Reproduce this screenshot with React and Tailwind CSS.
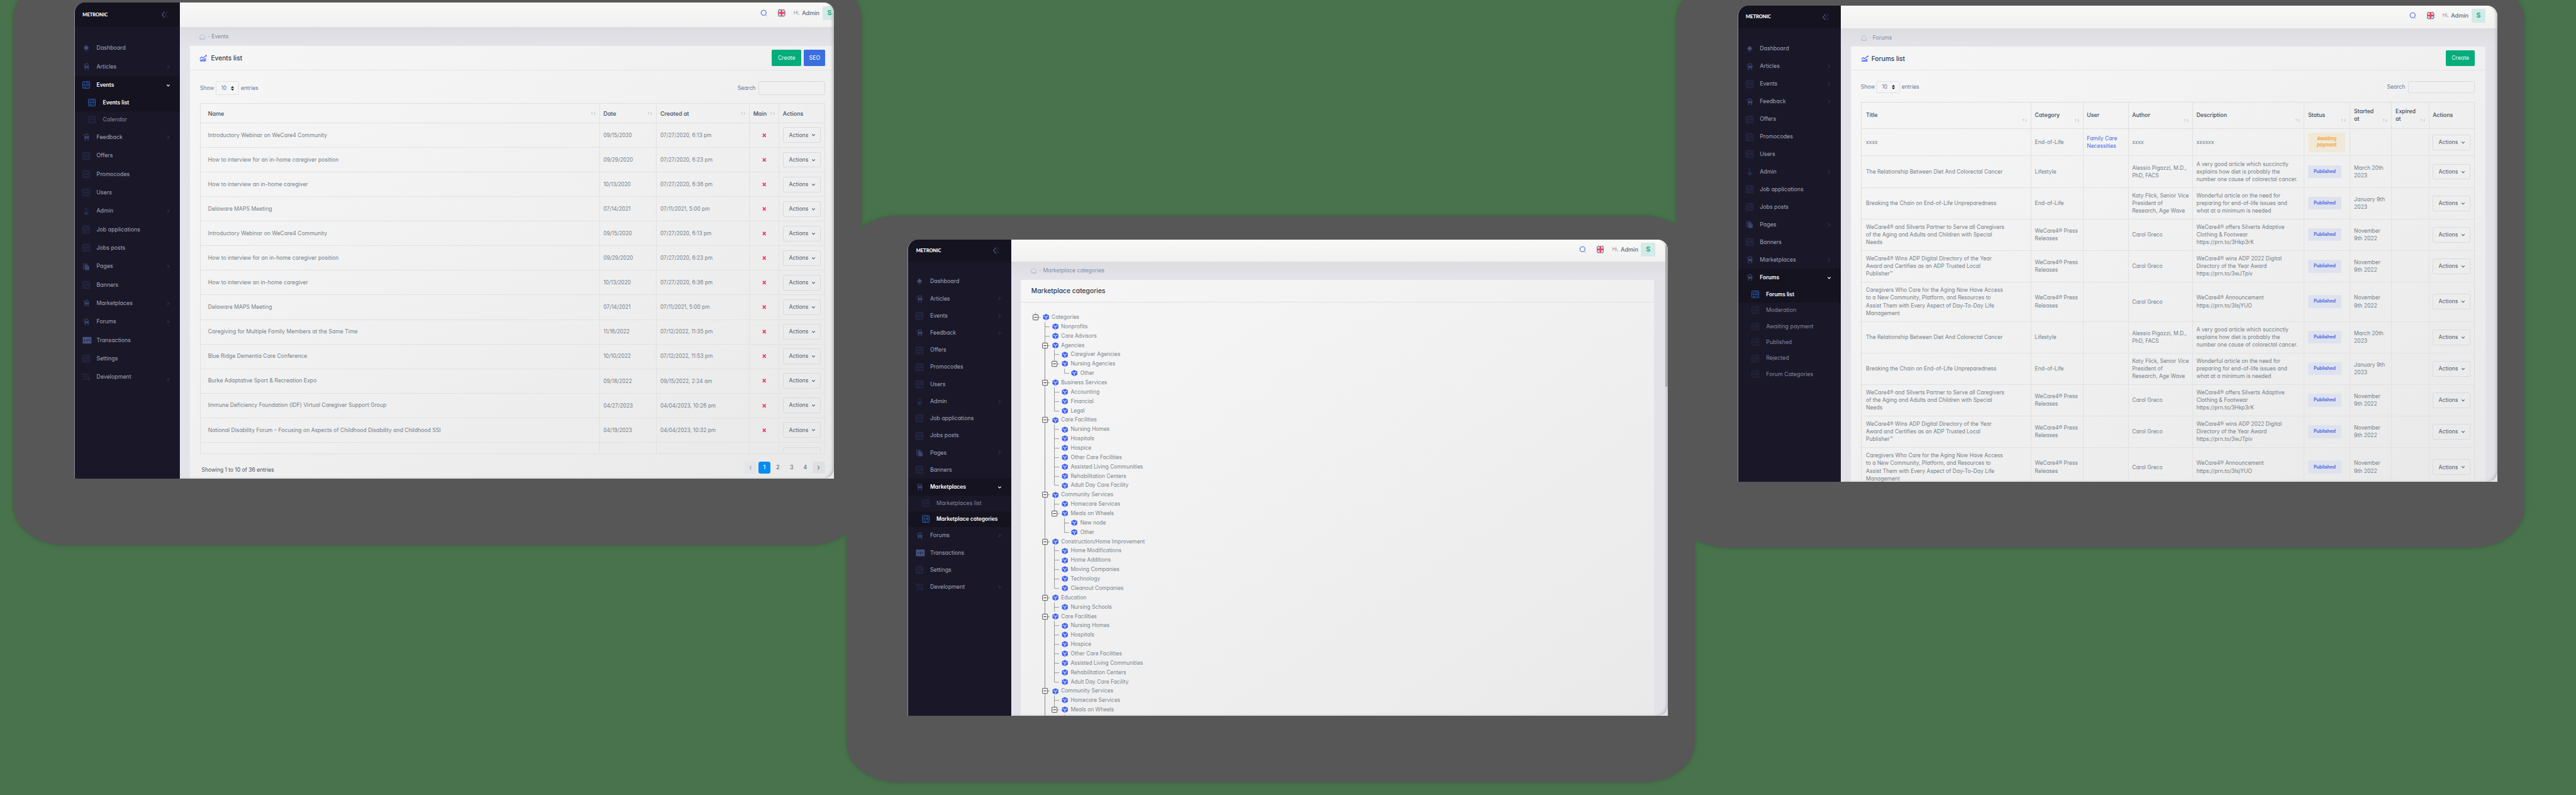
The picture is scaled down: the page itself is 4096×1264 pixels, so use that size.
import React from "react";

const Diamond = () => (
  <svg viewBox="0 0 14 14" className="h-[14px] w-[14px]" fill="currentColor">
    <path d="M7 0.8L11.8 5.6L7 10.4L2.2 5.6Z" />
    <path d="M2.6 8L7 12.4L11.4 8L12 8.7L7 13.6L2 8.7Z" opacity="0.45" />
  </svg>
);
const Cart = () => (
  <svg viewBox="0 0 14 14" className="h-[14px] w-[14px]" fill="currentColor">
    <path d="M1 2.2L3.4 5L3.9 9.5H11.6L12.6 5.2H4.4L1.8 1.6Z" />
    <path d="M5 5V3.8a2.7 2.7 0 0 1 5.4 0V5" fill="none" stroke="currentColor" strokeWidth="1.2" />
    <circle cx="5.2" cy="12.2" r="0.9" />
    <circle cx="10.4" cy="12.2" r="0.9" />
    <rect x="4.4" y="9.4" width="1.4" height="2.4" />
    <rect x="9.8" y="9.4" width="1.4" height="2.4" />
  </svg>
);
const Sheet = () => (
  <svg viewBox="0 0 14 14" className="h-[14px] w-[14px]" fill="none" stroke="currentColor" strokeWidth="1">
    <rect x="0.7" y="0.7" width="12.4" height="12.6" rx="0.8" />
    <path d="M2.5 3.2H5M6.5 3.2H11.4M2.6 6.8H5.4M8.4 6.8H11.4M7 5V8.8M2.6 10.9H7.6M9.6 10.9H11.4M3 5L4.4 8.6M11 5L9.8 8.6" />
  </svg>
);
const Person = () => (
  <svg viewBox="0 0 14 14" className="h-[14px] w-[14px]" fill="none" stroke="currentColor" strokeWidth="1">
    <path d="M5.6 5.6V2.6a1.4 1.4 0 0 1 2.8 0v3" />
    <path d="M5.6 5.6C4 6.4 3.2 7.8 3.2 9.2A3.8 3.8 0 0 0 10.8 9.2C10.8 7.8 10 6.4 8.4 5.6" />
    <path d="M5 8.4h4v2.2L7 12.4L5 10.6Z" fill="currentColor" />
  </svg>
);
const Pages = () => (
  <svg viewBox="0 0 14 14" className="h-[14px] w-[14px]">
    <path d="M1 0.8h8v1.6H3.4v9H1Z" fill="currentColor" opacity="0.6" />
    <path d="M4.4 3h5.2l2.8 2.8v7.4h-8Z" fill="currentColor" />
    <path d="M9.4 3.6v2.6H12" fill="none" stroke="#1a1828" strokeWidth="0.7" />
  </svg>
);
const Money = () => (
  <svg viewBox="0 0 17 14" className="h-[14px] w-[17px]">
    <rect x="0.6" y="1" width="15.8" height="12" rx="0.6" fill="currentColor" />
    <path d="M4.2 5v4.6M6.6 6.4l2-1v4.2M10.4 5.4h2.4v4.2" fill="none" stroke="#1a1828" strokeWidth="1" />
  </svg>
);
const Sliders = () => (
  <svg viewBox="0 0 14 14" className="h-[14px] w-[14px]" fill="none" stroke="currentColor" strokeWidth="1">
    <path d="M4 2.6H13M1 7H4.4M9.2 7H13M1 11.4H9.6M6.8 5V9" />
    <circle cx="2.4" cy="2.6" r="1.4" />
    <circle cx="11.4" cy="11.4" r="1.4" />
  </svg>
);
const ICONS = { diamond: Diamond, cart: Cart, sheet: Sheet, person: Person, pages: Pages, money: Money, sliders: Sliders };
const ICON_COLORS = {
  diamond: "text-[#454d78]",
  cart: "text-[#39426b]",
  sheet: "text-[#2f345a]",
  person: "text-[#2b3054]",
  pages: "text-[#3a4570]",
  money: "text-[#46537f]",
  sliders: "text-[#2f3559]",
};

const Chevron = ({ open }) =>
  open ? (
    <svg viewBox="0 0 8 8" className="h-[8px] w-[8px] text-white" fill="none" stroke="currentColor" strokeWidth="1.4">
      <path d="M1.4 3L4 5.6L6.6 3" />
    </svg>
  ) : (
    <svg viewBox="0 0 8 8" className="h-[8px] w-[8px] text-[#4b5070]" fill="none" stroke="currentColor" strokeWidth="0.9">
      <path d="M2.6 1.2L5.4 4L2.6 6.8" />
    </svg>
  );

const Home = () => (
  <svg viewBox="0 0 12 12" className="h-[12px] w-[11px]" fill="none" stroke="#a9b6cf" strokeWidth="1">
    <path d="M1.2 5L6 1L10.8 5V11H1.2Z" />
    <path d="M2.4 9.4H9.6V11H2.4Z" fill="#b9c4d8" stroke="none" />
  </svg>
);
const Chart = () => (
  <svg viewBox="0 0 14 12" className="h-[12px] w-[14px]" fill="#4263f0">
    <path d="M1 10.2L4.2 7.8L6.4 9L12 5.4V12H1Z" opacity="0.6" />
    <path d="M2 9h1.6v3H2zM5.4 9h1.6v3H5.400zM9 7.400h1.600V12H9z" />
    <path d="M0.800 7.600L4 4L6.800 6.200L12.400 1M12.800 0.600V3.400" fill="none" stroke="#4263f0" strokeWidth="1.300" />
  </svg>
);
const Cube = () => (
  <svg viewBox="0 0 12 12" className="h-[12px] w-[12px]">
    <path d="M6 0.300L11.400 3V9L6 11.800L0.600 9V3Z" fill="#4263ee" />
    <path d="M6 11V6.400L2.600 4M6 6.400L9.400 4" fill="none" stroke="#e8ecfb" strokeWidth="1.200" />
  </svg>
);
const Flag = () => (
  <svg viewBox="0 0 13 13" className="h-[13px] w-[13px]">
    <rect width="13" height="13" rx="2.500" fill="#243a78" />
    <path d="M1 1L12 12M12 1L1 12" stroke="#f3f3f5" strokeWidth="2" />
    <path d="M6.500 0V13M0 6.500H13" stroke="#f3f3f5" strokeWidth="5" />
    <path d="M6.500 0V13M0 6.500H13" stroke="#e8455e" strokeWidth="3" />
  </svg>
);
const Lens = () => (
  <svg viewBox="0 0 13 13" className="h-[13px] w-[13px]" fill="none">
    <circle cx="6" cy="6" r="4.600" stroke="#4a63ea" strokeWidth="1.300" />
    <path d="M9.600 9.800L12.200 12.400" stroke="#b9c3f2" strokeWidth="1.300" />
  </svg>
);
const SortIcon = () => (
  <svg viewBox="0 0 10 7" className="h-[7px] w-[10px] shrink-0" fill="none" stroke="#bcc0c6" strokeWidth="0.900">
    <path d="M2.500 6V1.200M1.200 2.500L2.500 1.200L3.800 2.500M7.500 1V5.800M6.200 4.500L7.500 5.800L8.800 4.500" />
  </svg>
);
const UpDown = () => (
  <svg viewBox="0 0 6 8" className="h-[8px] w-[6px]" fill="#14161f">
    <path d="M3 0L6 3.200H0ZM3 8L0 4.800H6Z" />
  </svg>
);

const NAV = [
  ["Dashboard", "diamond", false],
  ["Articles", "cart", true],
  ["Events", "sheet", true],
  ["Feedback", "cart", true],
  ["Offers", "sheet", false],
  ["Promocodes", "sheet", false],
  ["Users", "sheet", false],
  ["Admin", "person", true],
  ["Job applications", "sheet", false],
  ["Jobs posts", "sheet", false],
  ["Pages", "pages", true],
  ["Banners", "sheet", false],
  ["Marketplaces", "cart", true],
  ["Forums", "cart", true],
  ["Transactions", "money", false],
  ["Settings", "sheet", false],
  ["Development", "sliders", true],
];

function Sidebar({ width, header, navPad, row, subRow, open, subs, activeSub, last = "Development", blueParent, lowLast }) {
  const end = NAV.findIndex((n) => n[0] === last) + 1;
  return (
    <aside className={`flex shrink-0 flex-col overflow-hidden bg-[#1a1828] ${width}`}>
      <div className={`flex shrink-0 items-center justify-between bg-[#151320] pl-[14px] pr-[20px] ${header}`}>
        <span className="font-['Lato'] text-[8.6px] font-black leading-none text-white">METRONIC</span>
        <svg viewBox="0 0 14 12" className="h-[12px] w-[14px]" fill="none" strokeWidth="1.300">
          <path d="M6.500 0.600L2 6L6.500 11.400" stroke="#56608f" />
          <path d="M12 0.600L7.500 6L12 11.400" stroke="#2c3157" />
        </svg>
      </div>
      <nav className={`flex flex-col ${navPad}`}>
        {NAV.slice(0, end).map(([label, icon, arrow]) => {
          const isOpen = label === open;
          const Icon = ICONS[icon];
          return (
            <React.Fragment key={label}>
              <div className={`flex items-center pl-[13.500px] pr-[17px] ${row} ${isOpen ? "bg-[#151320]" : ""}`}>
                <span className={`flex w-[26px] shrink-0 ${isOpen && blueParent ? "text-[#2f6fd0]" : ICON_COLORS[icon]}`}>
                  <Icon />
                </span>
                <span className={`flex-1 whitespace-nowrap ${isOpen ? "text-[9.800px] font-semibold text-white" : "text-[10.100px] text-[#a3a5bb]"}`}>
                  {label}
                </span>
                {arrow && (
                  <span className={lowLast && label === last ? "pt-[10px]" : ""}>
                    <Chevron open={isOpen} />
                  </span>
                )}
              </div>
              {isOpen &&
                subs.map((s) => (
                  <div key={s} className={`flex items-center pl-[24.500px] ${subRow} ${s === activeSub ? "bg-[#151320]" : ""}`}>
                    <span className={`flex w-[26.500px] shrink-0 ${s === activeSub ? "text-[#2f6fd0]" : "text-[#2b2e4d]"}`}>
                      <Sheet />
                    </span>
                    <span className={`whitespace-nowrap ${s === activeSub ? "text-[9.650px] font-semibold text-white" : "text-[10.100px] text-[#8385a0]"}`}>
                      {s}
                    </span>
                  </div>
                ))}
            </React.Fragment>
          );
        })}
      </nav>
    </aside>
  );
}

function TopBar({ height, pad }) {
  return (
    <header className={`flex shrink-0 items-center justify-end bg-gradient-to-b from-[#f8f8f6] to-[#f1f1f1] ${height} ${pad}`}>
      <Lens />
      <div className="ml-[19.500px]"><Flag /></div>
      <span className="ml-[15px] w-[15.500px] text-[9px] text-[#8f97a8]">Hi,</span>
      <span className="w-[37px] text-[10.400px] font-medium text-[#5b6680]">Admin</span>
      <span className="flex h-[26px] w-[26px] shrink-0 items-center justify-center rounded-[3px] bg-[#d3eae6] text-[12px] font-bold text-[#10ad83]">S</span>
    </header>
  );
}

function Crumb({ label, height }) {
  return (
    <div className={`flex shrink-0 items-center bg-gradient-to-b from-[#dcdce1] to-[#e3e3e9] pl-[36px] text-[9.900px] text-[#7f90a8] ${height}`}>
      <Home />
      <span className="ml-[5px] mr-[4px] h-[2px] w-[2px] rounded-full bg-[#b6bfce]" />
      {label}
    </div>
  );
}

function Toolbar({ height, inputH }) {
  return (
    <div className={`flex shrink-0 items-center justify-between text-[9.800px] text-[#66799a] ${height}`}>
      <div className="flex items-center">
        <span className="w-[28.500px]">Show</span>
        <span className={`mr-[3.500px] flex w-[42.500px] items-center justify-between rounded-[2px] border border-[#dfe1e6] bg-[#f5f5f6] pl-[9px] pr-[8px] text-[9.500px] ${inputH}`}>
          10 <UpDown />
        </span>
        entries
      </div>
      <div className="flex items-center gap-[5px]">
        Search
        <span className={`w-[122px] rounded-[2px] border border-[#d9dbdf] bg-[#f0f0f0] ${inputH}`} />
      </div>
    </div>
  );
}

function ActionsButton() {
  return (
    <span className="flex h-[28.500px] w-[68.500px] shrink-0 items-center justify-between rounded-[2.500px] border border-[#d9dadf] pl-[9.500px] pr-[8px] text-[9.900px] text-[#525d68]">
      Actions
      <svg viewBox="0 0 8 8" className="h-[8px] w-[8px]" fill="none" stroke="#525d68" strokeWidth="1.200">
        <path d="M1.400 2.800L4 5.400L6.600 2.800" />
      </svg>
    </span>
  );
}

const EVENTS = [
  ["Introductory Webinar on WeCare4 Community", "09/15/2020", "07/27/2020, 6:13 pm"],
  ["How to interview for an in-home caregiver position", "09/29/2020", "07/27/2020, 6:23 pm"],
  ["How to interview an in-home caregiver", "10/13/2020", "07/27/2020, 6:36 pm"],
  ["Delaware MAPS Meeting", "07/14/2021", "07/11/2021, 5:00 pm"],
  ["Introductory Webinar on WeCare4 Community", "09/15/2020", "07/27/2020, 6:13 pm"],
  ["How to interview for an in-home caregiver position", "09/29/2020", "07/27/2020, 6:23 pm"],
  ["How to interview an in-home caregiver", "10/13/2020", "07/27/2020, 6:36 pm"],
  ["Delaware MAPS Meeting", "07/14/2021", "07/11/2021, 5:00 pm"],
  ["Caregiving for Multiple Family Members at the Same Time", "11/16/2022", "07/12/2022, 11:35 pm"],
  ["Blue Ridge Dementia Care Conference", "10/10/2022", "07/12/2022, 11:53 pm"],
  ["Burke Adaptative Sport & Recreation Expo", "09/18/2022", "09/15/2022, 2:24 am"],
  ["Immune Deficiency Foundation (IDF) Virtual Caregiver Support Group", "04/27/2023", "04/04/2023, 10:26 pm"],
  ["National Disability Forum – Focusing on Aspects of Childhood Disability and Childhood SSI", "04/19/2023", "04/04/2023, 10:32 pm"],
];
const EV_COLS = "grid grid-cols-[725px_103.500px_169px_54px_1fr]";

function EventsWindow() {
  return (
    <div className="absolute left-[135px] top-[5px] flex h-[866px] w-[1382px] overflow-hidden rounded-t-[19px] border-l border-[#8d8c98] bg-[#e3e4e9]">
      <Sidebar
        width="w-[190.500px]" header="h-[44px]" navPad="pt-[22px]" row="h-[33.550px]" subRow="h-[30.700px]"
        open="Events" subs={["Events list", "Calendar"]} activeSub="Events list" blueParent lowLast
      />
      <main className="flex w-[1191px] shrink-0 flex-col">
        <TopBar height="h-[44px] pb-[6px]" pad="-mr-[4px]" />
        <Crumb label="Events" height="h-[35px]" />
        <section className="ml-[18.500px] flex flex-1 flex-col bg-gradient-to-br from-[#f6f6f6] via-[#f0f0f0] to-[#e9e9e9]">
          <div className="flex h-[44.500px] shrink-0 items-center border-b border-[#e2e3e7] pl-[18px] pr-[16.500px]">
            <Chart />
            <h2 className="ml-[6.500px] flex-1 text-[11.700px] font-medium text-[#2f3a52]">Events list</h2>
            <button className="h-[29.500px] w-[54px] rounded-[2px] bg-[#04ad7b] text-[10px] text-[#eafaf5]">Create</button>
            <button className="ml-[4.500px] h-[29.500px] w-[39px] rounded-[2px] bg-[#3b6fe0] text-[10px] text-white">SEO</button>
          </div>
          <div className="flex flex-1 flex-col pl-[18.500px] pr-[16.500px]">
            <Toolbar height="h-[59.500px] pt-[4px]" inputH="h-[24.500px]" />
            <div className="flex flex-col border border-[#dfe0e4] text-[9.900px] text-[#74828c]">
              <div className={`h-[35px] border-b border-[#dfe0e4] text-[10.300px] font-medium text-[#414c5c] ${EV_COLS}`}>
                {["Name", "Date", "Created at", "Main", "Actions"].map((h, i) => (
                  <div key={h} className={`flex items-center justify-between pr-[6px] ${i === 0 ? "pl-[13.500px]" : "border-l border-[#e0e1e5] pl-[6.500px]"}`}>
                    {h}
                    {i < 4 && <SortIcon />}
                  </div>
                ))}
              </div>
              {EVENTS.map((r, i) => (
                <div key={i} className={`h-[44.700px] border-b border-[#e0e1e4] ${EV_COLS}`}>
                  <div className="flex items-center whitespace-nowrap pl-[13.500px]">{r[0]}</div>
                  <div className="flex items-center border-l border-[#e0e1e5] pl-[6.500px] text-[9.500px]">{r[1]}</div>
                  <div className="flex items-center border-l border-[#e0e1e5] pl-[6.500px] text-[9.500px]">{r[2]}</div>
                  <div className="flex items-center justify-center border-l border-[#e0e1e5]">
                    <svg viewBox="0 0 8 8" className="h-[7.500px] w-[7.500px]" stroke="#ee3560" strokeWidth="1.900">
                      <path d="M1 0.800L7 7.200M7 0.800L1 7.200" />
                    </svg>
                  </div>
                  <div className="flex items-center border-l border-[#e0e1e5] pl-[7px]"><ActionsButton /></div>
                </div>
              ))}
              <div className={`h-[20px] overflow-hidden ${EV_COLS}`}>
                <div />
                <div className="border-l border-[#e0e1e5]" />
                <div className="border-l border-[#e0e1e5]" />
                <div className="border-l border-[#e0e1e5]" />
                <div className="flex items-start border-l border-[#e0e1e5] pl-[7px] pt-[8px]">
                  <div className="h-[9px] w-[68.500px] rounded-t-[2.500px] border border-b-0 border-[#d9dadf]" />
                </div>
              </div>
            </div>
            <div className="flex flex-1 items-start justify-between pt-[13.500px]">
              <span className="pl-[3px] pt-[8px] text-[9.720px] leading-[14px] text-[#4b5666]">Showing 1 to 10 of 36 entries</span>
              <div className="flex items-center gap-[2.800px] pr-[1px] text-[10px] font-medium text-[#626d78]">
                <span className="flex h-[22px] w-[22px] items-center justify-center rounded-[3px] bg-[#e4e5e8] text-[#9aa1aa]">
                  <svg viewBox="0 0 8 8" className="h-[8px] w-[8px]" fill="none" stroke="currentColor" strokeWidth="1.200"><path d="M5.400 0.800L2.600 4L5.400 7.200" /></svg>
                </span>
                <span className="flex h-[22px] w-[22px] items-center justify-center rounded-[4px] bg-[#068bf0] text-white">1</span>
                <span className="w-[22px] text-center">2</span>
                <span className="w-[22px] text-center">3</span>
                <span className="w-[22px] text-center">4</span>
                <span className="flex h-[22px] w-[22px] items-center justify-center rounded-[3px] bg-[#dfe0e4]">
                  <svg viewBox="0 0 8 8" className="h-[8px] w-[8px]" fill="none" stroke="currentColor" strokeWidth="1.200"><path d="M2.600 0.800L5.400 4L2.600 7.200" /></svg>
                </span>
              </div>
            </div>
          </div>
        </section>
      </main>
      <Glass />
    </div>
  );
}

/* Soft shade along the right and bottom edge of a window. */
const Glass = () => (
  <div className="pointer-events-none absolute inset-y-0 left-[192px] right-0 rounded-br-[19px] rounded-tr-[19px] shadow-[inset_-5px_-2px_5px_-3px_#b4b5bb]" />
);

/* kind: "box" has children, "leaf" has none; "end" closes its group; guides lists the ancestor lines */
const care = [
  [2, "Nursing Homes", "leaf"],
  [2, "Hospitals", "leaf"],
  [2, "Hospice", "leaf"],
  [2, "Other Care Facilities", "leaf"],
  [2, "Assisted Living Communities", "leaf"],
  [2, "Rehabilitation Centers", "leaf"],
  [2, "Adult Day Care Facility", "end"],
];
const TREE = [
  [0, "Categories", "box"],
  [1, "Nonprofits", "leaf"],
  [1, "Care Advisors", "leaf"],
  [1, "Agencies", "box"],
  [2, "Caregiver Agencies", "leaf"],
  [2, "Nursing Agencies", "boxend"],
  [3, "Other", "end"],
  [1, "Business Services", "box"],
  [2, "Accounting", "leaf"],
  [2, "Financial", "leaf"],
  [2, "Legal", "end"],
  [1, "Care Facilities", "box"],
  ...care,
  [1, "Community Services", "box"],
  [2, "Homecare Services", "leaf"],
  [2, "Meals on Wheels", "boxend"],
  [3, "New node", "leaf"],
  [3, "Other", "end"],
  [1, "Construction/Home Improvement", "box"],
  [2, "Home Modifications", "leaf"],
  [2, "Home Additions", "leaf"],
  [2, "Moving Companies", "leaf"],
  [2, "Technology", "leaf"],
  [2, "Cleanout Companies", "end"],
  [1, "Education", "box"],
  [2, "Nursing Schools", "leaf"],
  [1, "Care Facilities", "box"],
  ...care,
  [1, "Community Services", "box"],
  [2, "Homecare Services", "leaf"],
  [2, "Meals on Wheels", "boxend"],
  [3, "", "stub"],
];

function Guide({ kind, root }) {
  if (kind === "blank") return <span className="w-[17.400px] shrink-0" />;
  if (kind === "line")
    return <span className="flex w-[17.400px] shrink-0 justify-center"><span className="h-full w-px bg-[#8d8d8d]" /></span>;
  const isBox = kind === "box" || kind === "boxend";
  const closes = kind === "end" || kind === "boxend" || root;
  return (
    <svg viewBox="0 0 17.4 17" className="h-[17px] w-[17.400px] shrink-0 overflow-visible" fill="none" stroke="#8d8d8d" strokeWidth="1">
      <path d={closes ? "M8.700 0V8.500" : "M8.700 0V17"} />
      {kind !== "stub" && <path d="M8.700 8.700H17.400" />}
      {isBox && <rect x="4.200" y="3.800" width="9.200" height="9.600" rx="1" fill="#f5f5f5" stroke="#4a4a4a" strokeWidth="1.100" />}
      {isBox && <path d="M6.400 8.600H11.200" stroke="#333" strokeWidth="1.200" />}
    </svg>
  );
}

function TreeRow({ level, label, kind }) {
  const guides = [];
  for (let l = 0; l < level; l++) guides.push(l === 1 ? "line" : "blank");
  return (
    <div className="flex h-[17px] shrink-0 items-stretch text-[9.700px] leading-[17px] text-[#7b8790]">
      {guides.map((g, i) => <Guide key={i} kind={g} />)}
      <Guide kind={kind} root={level === 0} />
      {kind !== "stub" && (
        <>
          <span className="ml-[4px] flex w-[16.500px] shrink-0 items-center"><Cube /></span>
          <span className="whitespace-nowrap">{label}</span>
        </>
      )}
    </div>
  );
}

function CategoriesWindow() {
  return (
    <div className="absolute left-[1651px] top-[436px] flex h-[866px] w-[1382px] overflow-hidden rounded-t-[19px] border-l border-[#8d8c98] bg-[#e2e2e8]">
      <Sidebar
        width="w-[187px]" header="h-[40px]" navPad="pt-[20.600px]" row="h-[31.150px]" subRow="h-[28.700px]"
        open="Marketplaces" subs={["Marketplaces list", "Marketplace categories"]} activeSub="Marketplace categories"
      />
      <main className="flex w-[1194px] shrink-0 flex-col">
        <TopBar height="h-[40px] pb-[6px]" pad="pr-[22.500px] pt-[2px]" />
        <Crumb label="Marketplace categories" height="h-[32.500px]" />
        <section className="ml-[17.500px] mr-[25px] flex min-h-0 flex-1 flex-col bg-gradient-to-br from-[#f6f6f6] via-[#f0f0f0] to-[#e9e9e9]">
          <div className="flex h-[42px] shrink-0 items-center border-b border-[#dedfe3] pl-[19px]">
            <h2 className="text-[11.800px] font-medium text-[#2f3a52]">Marketplace categories</h2>
          </div>
          <div className="flex min-h-0 flex-1 flex-col overflow-hidden pl-[18px] pt-[18px]">
            {TREE.map(([level, label, kind], i) => <TreeRow key={i} level={level} label={label} kind={kind} />)}
          </div>
        </section>
      </main>
      <Glass />
      <div className="absolute right-0 top-[10px] h-[257px] w-[4.500px] rounded-b-[2px] bg-[#a9a9aa]" />
    </div>
  );
}

const press = ["WeCare4® Press", "Releases"];
const nov = ["November", "9th 2022"];
const relationship = {
  h: "h-[57.300px]", title: ["The Relationship Between Diet And Colorectal Cancer"], category: ["Lifestyle"],
  author: ["Alessio Pigazzi, M.D.,", "PhD, FACS"],
  description: ["A very good article which succinctly", "explains how diet is probably the", "number one cause of colorectal cancer."],
  started: ["March 20th", "2023"],
};
const breaking = {
  h: "h-[57.300px]", title: ["Breaking the Chain on End-of-Life Unpreparedness"], category: ["End-of-Life"],
  author: ["Katy Flick, Senior Vice", "President of", "Research, Age Wave"],
  description: ["Wonderful article on the need for", "preparing for end-of-life issues and", "what at a minimum is needed"],
  started: ["January 9th", "2023"],
};
const silverts = {
  h: "h-[57.300px]", title: ["WeCare4® and Silverts Partner to Serve all Caregivers", "of the Aging and Adults and Children with Special", "Needs"],
  category: press, author: ["Carol Greco"],
  description: ["WeCare4® offers Silverts Adaptive", "Clothing & Footwear", "https://prn.to/3Hkp3rK"], started: nov,
};
const adp = {
  h: "h-[57.300px]", title: ["WeCare4® Wins ADP Digital Directory of the Year", "Award and Certifies as an ADP Trusted Local", "Publisher™"],
  category: press, author: ["Carol Greco"],
  description: ["WeCare4® wins ADP 2022 Digital", "Directory of the Year Award", "https://prn.to/3wJTpiv"], started: nov,
};
const access = {
  h: "h-[71.700px]",
  title: ["Caregivers Who Care for the Aging Now Have Access", "to a New Community, Platform, and Resources to", "Assist Them with Every Aspect of Day-To-Day Life", "Management"],
  category: press, author: ["Carol Greco"],
  description: ["WeCare4® Announcement", "https://prn.to/3IsjYUO"], started: nov,
};
const FORUMS = [
  { h: "h-[49.600px]", title: ["xxxx"], category: ["End-of-Life"], user: ["Family Care", "Necessities"], author: ["xxxx"], description: ["xxxxxx"], awaiting: true, started: [] },
  relationship, breaking, silverts, adp, access, relationship, breaking, silverts, adp, access,
];
const FO_COLS = "grid shrink-0 grid-cols-[308px_94.500px_82.300px_117px_203px_83.700px_75.500px_67.700px_1fr]";
const Lines = ({ lines }) => (
  <div className="flex flex-col whitespace-nowrap">{lines.map((l) => <span key={l}>{l}</span>)}</div>
);
const CELL = "flex items-center border-l border-[#e0e1e5] pl-[6.500px]";

function ForumsWindow() {
  return (
    <div className="absolute left-[3160px] top-[10px] flex h-[866px] w-[1382px] overflow-hidden rounded-t-[19px] border-l border-[#8d8c98] bg-[#e2e2e8]">
      <Sidebar
        width="w-[187px]" header="h-[42px]" navPad="pt-[21px]" row="h-[32px]" subRow="h-[29.100px]"
        open="Forums" subs={["Forums list", "Moderation", "Awaiting payment", "Published", "Rejected", "Forum Categories"]}
        activeSub="Forums list" last="Forums"
      />
      <main className="flex w-[1194px] shrink-0 flex-col">
        <TopBar height="h-[42px] pb-[6px]" pad="pr-[21.500px] pt-[1px]" />
        <Crumb label="Forums" height="h-[33px]" />
        <section className="ml-[18px] mr-[22px] flex min-h-0 flex-1 flex-col overflow-hidden rounded-t-[3px] bg-gradient-to-br from-[#f6f6f6] via-[#f0f0f0] to-[#e9e9e9]">
          <div className="flex h-[43.500px] shrink-0 items-center border-b border-[#e2e3e7] pl-[18px] pr-[19px]">
            <Chart />
            <h2 className="ml-[5.500px] flex-1 text-[11.700px] font-medium text-[#2f3a52]">Forums list</h2>
            <button className="h-[28.500px] w-[53px] rounded-[2px] bg-[#04ad7b] text-[10px] text-[#eafaf5]">Create</button>
          </div>
          <div className="flex min-h-0 flex-1 flex-col overflow-hidden pl-[18px] pr-[19px]">
            <Toolbar height="h-[56.500px] pt-[3.500px]" inputH="h-[22.800px]" />
            <div className="flex shrink-0 flex-col border border-[#dcdde1] text-[9.750px] leading-[14.100px] text-[#74828c]">
              <div className={`h-[48.500px] border-b border-[#dfe0e4] text-[10.100px] font-medium text-[#414c5c] ${FO_COLS}`}>
                {[["Title"], ["Category"], ["User"], ["Author"], ["Description"], ["Status"], ["Started", "at"], ["Expired", "at"], ["Actions"]].map((h, i) => (
                  <div key={h[0]} className={`flex items-center justify-between pr-[6px] ${i === 0 ? "pl-[8.500px]" : "border-l border-[#e0e1e5] pl-[6.500px]"}`}>
                    <Lines lines={h} />
                    {i < 8 && i !== 2 && <span className="-ml-[10px] pt-[17px]"><SortIcon /></span>}
                  </div>
                ))}
              </div>
              {FORUMS.map((r, i) => (
                <div key={i} className={`border-b border-[#e0e1e4] ${FO_COLS} ${r.h}`}>
                  <div className="flex items-center pl-[8.500px]"><Lines lines={r.title} /></div>
                  <div className={CELL}><Lines lines={r.category} /></div>
                  <div className={`text-[#4c6ce8] ${CELL}`}><Lines lines={r.user || []} /></div>
                  <div className={CELL}><Lines lines={r.author} /></div>
                  <div className={CELL}><Lines lines={r.description} /></div>
                  <div className={CELL}>
                    {r.awaiting ? (
                      <span className="flex h-[36px] w-[68px] items-center justify-center rounded-[2px] bg-[#f0e9d8] text-center text-[8.400px] font-semibold leading-[12px] text-[#f0a238]">
                        Awaiting<br />payment
                      </span>
                    ) : (
                      <span className="flex h-[23.500px] w-[60.500px] items-center justify-center rounded-[2px] bg-[#dee2ee] text-[8.360px] font-semibold text-[#3f60e0]">Published</span>
                    )}
                  </div>
                  <div className={CELL}><Lines lines={r.started} /></div>
                  <div className={CELL} />
                  <div className={CELL}><ActionsButton /></div>
                </div>
              ))}
            </div>
          </div>
        </section>
      </main>
      <Glass />
    </div>
  );
}

const SHELL = "absolute h-[1031px] w-[1543px] rounded-[95px/72px] bg-[#575757]";

export default function App() {
  return (
    <div className="h-[1264px] w-[4096px] overflow-hidden bg-[#49734c]">
      <div className="relative h-[1446px] w-[4685px] overflow-hidden font-['Inter','Liberation_Sans',sans-serif] leading-none [font-feature-settings:'cv11'] [zoom:0.87428]">
        <div className="absolute inset-0 drop-shadow-[0_0_4px_#33643a]">
          <div className={`left-[24px] top-[-39px] ${SHELL}`} />
          <div className={`left-[1539px] top-[392px] ${SHELL}`} />
          <div className={`left-[3048px] top-[-35px] ${SHELL}`} />
        </div>
        <EventsWindow />
        <CategoriesWindow />
        <ForumsWindow />
      </div>
    </div>
  );
}
